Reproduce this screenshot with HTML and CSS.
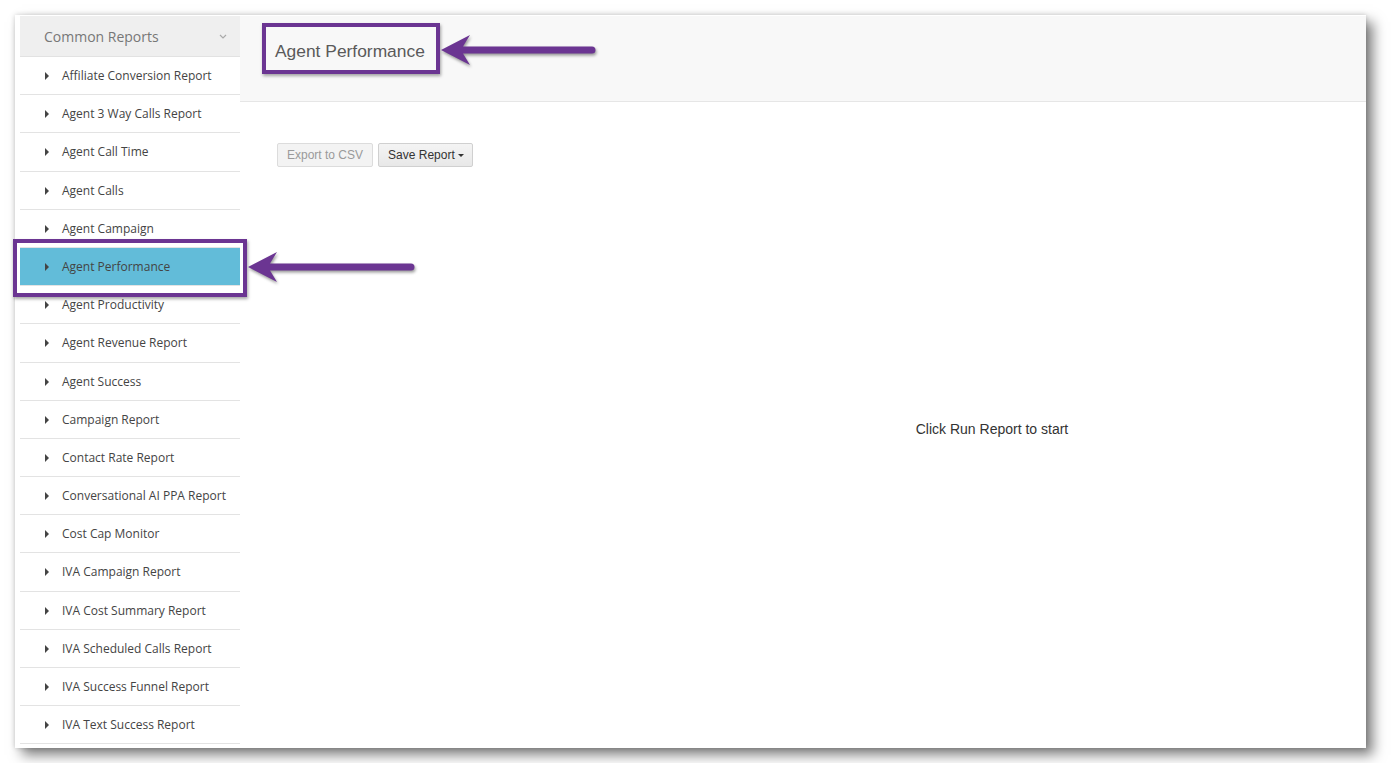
FILE: index.html
```html
<!DOCTYPE html>
<html lang="en">
<head>
    <meta charset="UTF-8">
    <title>Agent Performance</title>
    <link rel="stylesheet" href="styles.css">
</head>
<body>

<div class="window">
    <div class="sidebar">
        <div class="sidebar-head">
            <span>Common Reports</span>
            <svg class="chev" width="8" height="5" viewBox="0 0 8 5"><path d="M1 1 L4 4 L7 1" fill="none" stroke="#aaa" stroke-width="1.2"/></svg>
        </div>
        <ul class="report-list">
            <li>Affiliate Conversion Report</li>
            <li>Agent 3 Way Calls Report</li>
            <li>Agent Call Time</li>
            <li>Agent Calls</li>
            <li>Agent Campaign</li>
            <li class="active">Agent Performance</li>
            <li>Agent Productivity</li>
            <li>Agent Revenue Report</li>
            <li>Agent Success</li>
            <li>Campaign Report</li>
            <li>Contact Rate Report</li>
            <li>Conversational AI PPA Report</li>
            <li>Cost Cap Monitor</li>
            <li>IVA Campaign Report</li>
            <li>IVA Cost Summary Report</li>
            <li>IVA Scheduled Calls Report</li>
            <li>IVA Success Funnel Report</li>
            <li>IVA Text Success Report</li>
        </ul>
    </div>

    <div class="main">
        <div class="main-head">
            <h1 class="callout">Agent Performance</h1>
        </div>
        <div class="main-body">
            <div class="toolbar">
                <button class="btn" disabled>Export to CSV</button>
                <button class="btn">Save Report <span class="caret"></span></button>
            </div>
            <p class="empty">Click Run Report to start</p>
        </div>
    </div>
</div>

<!-- annotations -->
<div class="mark-row"></div>
<svg class="arrow arrow-title" width="162" height="34" viewBox="0 0 162 34">
    <path d="M1 17 L30 2 L23 13.5 L152 13.5 A3.5 3.5 0 0 1 152 20.5 L23 20.5 L30 32 Z" fill="#6b3592"/>
</svg>
<svg class="arrow arrow-row" width="174" height="34" viewBox="0 0 174 34">
    <path d="M1 17 L30 2 L23 13.5 L164 13.5 A3.5 3.5 0 0 1 164 20.5 L23 20.5 L30 32 Z" fill="#6b3592"/>
</svg>

</body>
</html>
```

FILE: styles.css
```css
body {
    margin: 0;
    padding: 15px;
    background: #fff;
    font-family: "Liberation Sans", Arial, sans-serif;
}

.window {
    display: flex;
    width: 1351px;
    height: 733px;
    background: #fff;
    box-sizing: border-box;
    padding-top: 1px;
    box-shadow: 0 0 5px rgba(0, 0, 0, 0.18), 7px 7px 12px rgba(0, 0, 0, 0.5);
    overflow: hidden;
}

/* sidebar */
.sidebar {
    width: 220px;
    margin-left: 5px;
    flex-shrink: 0;
    font-family: "Open Sans", sans-serif;
}
.sidebar-head {
    display: flex;
    align-items: center;
    justify-content: space-between;
    height: 40px;
    padding: 0 13px 0 24px;
    background: #efefef;
    border-bottom: 1px solid #e2e2e2;
    color: #777;
    font-size: 14px;
}
.report-list {
    list-style: none;
    margin: 0;
    padding: 0;
}
.report-list li {
    position: relative;
    height: 37.2px;
    line-height: 38.6px;
    padding-left: 42px;
    border-bottom: 1px solid #e3e3e3;
    color: #444;
    font-size: 12px;
    white-space: nowrap;
}
.report-list li::before {
    content: "";
    position: absolute;
    left: 25px;
    top: 15px;
    border-left: 4.5px solid #444;
    border-top: 4px solid transparent;
    border-bottom: 4px solid transparent;
}
.report-list li.active {
    background: #62bcd9;
}

/* main */
.main {
    flex: 1;
    display: flex;
    flex-direction: column;
}
.main-head {
    height: 86px;
    background: #f8f8f8;
    border-bottom: 1px solid #e6e6e6;
    padding: 7px 0 0 22px;
    box-sizing: border-box;
}
.callout {
    display: inline-block;
    margin: 0;
    width: 178px;
    height: 51px;
    box-sizing: border-box;
    border: 4.5px solid #6b3592;
    padding: 14px 0 0 9px;
    font-weight: normal;
    font-size: 17.4px;
    color: #5a5a5a;
    box-shadow: 1px 2px 3px rgba(0, 0, 0, 0.35);
}
.main-body {
    padding: 41px 0 0 37px;
}
.toolbar {
    display: flex;
    gap: 5px;
}
.btn {
    height: 24px;
    padding: 0 9px;
    font-family: "Liberation Sans", Arial, sans-serif;
    font-size: 12px;
    color: #333;
    background: linear-gradient(#f4f4f4, #e8e8e8);
    border: 1px solid #d0d0d0;
    border-radius: 2px;
}
.btn + .btn {
    padding: 0 8px 0 9px;
}
.btn[disabled] {
    color: #9a9a9a;
    background: #f3f3f3;
    border-color: #dcdcdc;
}
.caret {
    display: inline-block;
    vertical-align: middle;
    margin-left: 0;
    border-top: 3px solid #333;
    border-left: 3px solid transparent;
    border-right: 3px solid transparent;
}
.empty {
    margin: 254px 0 0;
    padding-left: 341px;
    text-align: center;
    font-size: 14px;
    color: #333;
}

/* annotations */
.mark-row {
    position: absolute;
    left: 13px;
    top: 239px;
    width: 234px;
    height: 58px;
    box-sizing: border-box;
    border: 4.5px solid #6b3592;
    box-shadow: 1px 2px 3px rgba(0, 0, 0, 0.35), inset 0 0 0 3px #fff;
}
.arrow {
    position: absolute;
    filter: drop-shadow(1px 2px 1.5px rgba(0, 0, 0, 0.4));
}
.arrow-title {
    left: 440px;
    top: 33px;
}
.arrow-row {
    left: 247px;
    top: 250px;
}
```
